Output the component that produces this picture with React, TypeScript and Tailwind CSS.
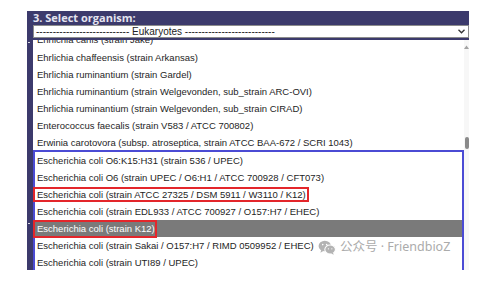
import React from "react";

type Row = { name: string; mark?: number; selected?: boolean };

const topRows: Row[] = [
    { name: "Ehrlichia chaffeensis (strain Arkansas)" },
    { name: "Ehrlichia ruminantium (strain Gardel)" },
    { name: "Ehrlichia ruminantium (strain Welgevonden, sub_strain ARC-OVI)" },
    { name: "Ehrlichia ruminantium (strain Welgevonden, sub_strain CIRAD)" },
    { name: "Enterococcus faecalis (strain V583 / ATCC 700802)" },
    { name: "Erwinia carotovora (subsp. atroseptica, strain ATCC BAA-672 / SCRI 1043)" },
];

const coliRows: Row[] = [
    { name: "Escherichia coli O6:K15:H31 (strain 536 / UPEC)" },
    { name: "Escherichia coli O6 (strain UPEC / O6:H1 / ATCC 700928 / CFT073)" },
    { name: "Escherichia coli (strain ATCC 27325 / DSM 5911 / W3110 / K12)", mark: 1 },
    { name: "Escherichia coli (strain EDL933 / ATCC 700927 / O157:H7 / EHEC)" },
    { name: "Escherichia coli (strain K12)", mark: 2, selected: true },
    { name: "Escherichia coli (strain Sakai / O157:H7 / RIMD 0509952 / EHEC)" },
    { name: "Escherichia coli (strain UTI89 / UPEC)" },
];

const OrganismRow = ({ row, inBox }: { row: Row; inBox?: boolean }) => (
    <div
        className={`relative h-[17px] leading-[17px] whitespace-nowrap ${
            inBox ? "pl-[2px]" : "pl-[4px]"
        } ${row.selected ? "bg-[#7a7a7a] text-white" : "text-[#1e1e1e]"}`}
    >
        {row.name}
        {row.mark === 1 && (
            <span className="absolute -left-[2px] top-[1px] w-[276px] h-[15px] border-2 border-[#e3262b]" />
        )}
        {row.mark === 2 && (
            <span className="absolute -left-[2px] top-0 w-[124px] h-[18px] border-2 border-[#e3262b]" />
        )}
    </div>
);

export default function App() {
    return (
        <div className="relative w-[487px] h-[282px] bg-white pt-[11px] pl-[27px] font-['Liberation_Sans',Arial,sans-serif]">
            <div className="w-[442px]">
                <div className="h-[14px] bg-[#3c3a6c] pl-[6px] flex items-center text-[11px] font-bold text-[#e4e4f0] font-['Open_Sans',sans-serif]">
                    3. Select organism:
                </div>
                <div className="bg-[#3c3a6c] pl-[6px] pb-[2px]">
                    <div className="h-[13px] bg-white border border-[#8c8c8c] flex items-center justify-between pl-[2px] pr-[3px] text-[10px] leading-none text-[#222]">
                        <span>---------------------------- Eukaryotes ---------------------------</span>
                        <svg width="7" height="5" viewBox="0 0 7 5">
                            <path d="M0.5 0.8 L3.5 3.8 L6.5 0.8" fill="none" stroke="#333" strokeWidth="1.3" />
                        </svg>
                    </div>
                </div>
                <div className="flex h-[230px]">
                    <div className="w-[6px] bg-[#3c3a6c] flex flex-col">
                        <div className="mt-[2px] ml-[1px] w-[2px] h-px bg-white/80" />
                        <div className="mt-[180px] ml-[1px] w-[2px] h-px bg-white/80" />
                    </div>
                    <div className="flex-1 flex bg-white overflow-hidden text-[9.5px]">
                        <div className="flex-1 overflow-hidden">
                            <div className="h-[9px] overflow-hidden">
                                <div className="-mt-[9px] h-[17px] leading-[17px] pl-[4px] whitespace-nowrap text-[#1e1e1e]">
                                    Ehrlichia canis (strain Jake)
                                </div>
                            </div>
                            {topRows.map((r) => (
                                <OrganismRow key={r.name} row={r} />
                            ))}
                            <div className="-mt-px border-2 border-b-0 border-[#4b4bd4]">
                                {coliRows.map((r) => (
                                    <OrganismRow key={r.name} row={r} inBox />
                                ))}
                            </div>
                        </div>
                        <div className="w-[5px] bg-[#f7f7f7] flex flex-col items-center">
                            <svg width="5" height="4" viewBox="0 0 5 4" className="mt-[5px]">
                                <path d="M0 4 L2.5 0.5 L5 4 Z" fill="#a3a3a3" />
                            </svg>
                            <div className="mt-[88px] w-[4px] h-[12px] rounded-[2px] bg-[#8a8a8a]" />
                        </div>
                    </div>
                </div>
            </div>
            <div className="absolute left-[318px] top-[238px] flex items-center gap-[4px] text-[12.5px] text-[#ababab] font-['Noto_Sans','Noto_Sans_CJK_SC',sans-serif]">
                <svg width="18" height="15" viewBox="0 0 15 13">
                    <ellipse cx="5.6" cy="5.2" rx="5.4" ry="4.6" fill="#b3b3b3" />
                    <path d="M2.5 8.5 L1.8 11 L4.6 9.4 Z" fill="#b3b3b3" />
                    <ellipse cx="10.2" cy="8.2" rx="4.6" ry="3.9" fill="#b3b3b3" stroke="white" strokeWidth="0.9" />
                    <path d="M12.6 11 L13.4 12.8 L11 11.7 Z" fill="#b3b3b3" />
                    <circle cx="3.8" cy="4" r="0.7" fill="white" />
                    <circle cx="7.2" cy="4" r="0.7" fill="white" />
                    <circle cx="8.7" cy="7.6" r="0.55" fill="white" />
                    <circle cx="11.7" cy="7.6" r="0.55" fill="white" />
                </svg>
                <span>公众号 · FriendbioZ</span>
            </div>
        </div>
    );
}
